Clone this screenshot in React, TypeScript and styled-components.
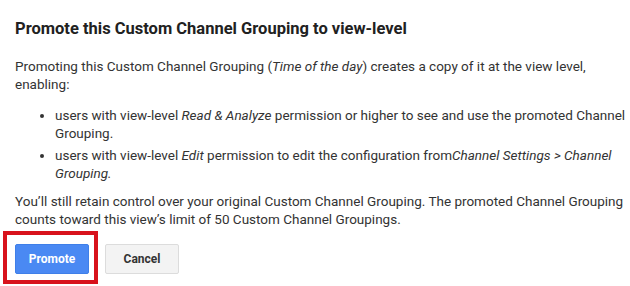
import React from "react";
import styled, { createGlobalStyle } from "styled-components";

const Global = createGlobalStyle`
  html, body { margin: 0; padding: 0; background: #ffffff; }
  body { font-family: Roboto, "Liberation Sans", Arial, sans-serif; }
`;

const Dialog = styled.div`
  width: 630px;
  height: 286px;
  box-sizing: border-box;
  padding: 17px 0 0 15px;
  color: #333333;
  font-size: 13.5px;
  line-height: 18px;
`;

const Title = styled.h2`
  margin: 0 0 16px 0;
  font-size: 16.5px;
  line-height: 24px;
  font-weight: 700;
  color: #212121;
`;

const Paragraph = styled.p<{ $gap?: number }>`
  margin: 0 0 ${(p) => p.$gap ?? 0}px 0;
`;

const List = styled.ul`
  margin: 0 0 10px 0;
  padding: 0 0 0 40px;
  list-style: disc;
`;

const Item = styled.li`
  margin-bottom: 4px;
  &:last-child { margin-bottom: 0; }
`;

const Actions = styled.div`
  display: flex;
  gap: 16px;
  margin-top: 16px;
`;

const Highlight = styled.div`
  position: relative;
  display: flex;
  &::after {
    content: "";
    position: absolute;
    left: -12px;
    right: -9px;
    top: -13px;
    bottom: -10px;
    border: 4px solid #d8121c;
    pointer-events: none;
  }
`;

const Button = styled.button<{ $primary?: boolean }>`
  width: 74px;
  height: 30px;
  box-sizing: border-box;
  border-radius: 2px;
  font-family: Roboto, "Liberation Sans", Arial, sans-serif;
  font-size: 12px;
  font-weight: 700;
  cursor: pointer;
  border: 1px solid ${(p) => (p.$primary ? "#3f7fe8" : "#dcdcdc")};
  background: ${(p) => (p.$primary ? "#4a89f3" : "#f3f3f3")};
  color: ${(p) => (p.$primary ? "#ffffff" : "#333333")};
  padding: 0;
`;

export default function App() {
  return (
    <>
      <Global />
      <Dialog>
        <Title>Promote this Custom Channel Grouping to view-level</Title>
        <Paragraph $gap={13}>
          Promoting this Custom Channel Grouping (<i>Time of the day</i>) creates a copy of it at the view level,
          enabling:
        </Paragraph>
        <List>
          <Item>
            users with view-level <i>Read &amp; Analyze</i> permission or higher to see and use the promoted Channel
            Grouping.
          </Item>
          <Item>
            users with view-level <i>Edit</i> permission to edit the configuration from<i>Channel Settings &gt; Channel Grouping.</i>
          </Item>
        </List>
        <Paragraph>
          You’ll still retain control over your original Custom Channel Grouping. The promoted Channel Grouping
          counts toward this view’s limit of 50 Custom Channel Groupings.
        </Paragraph>
        <Actions>
          <Highlight>
            <Button $primary>Promote</Button>
          </Highlight>
          <Button>Cancel</Button>
        </Actions>
      </Dialog>
    </>
  );
}
